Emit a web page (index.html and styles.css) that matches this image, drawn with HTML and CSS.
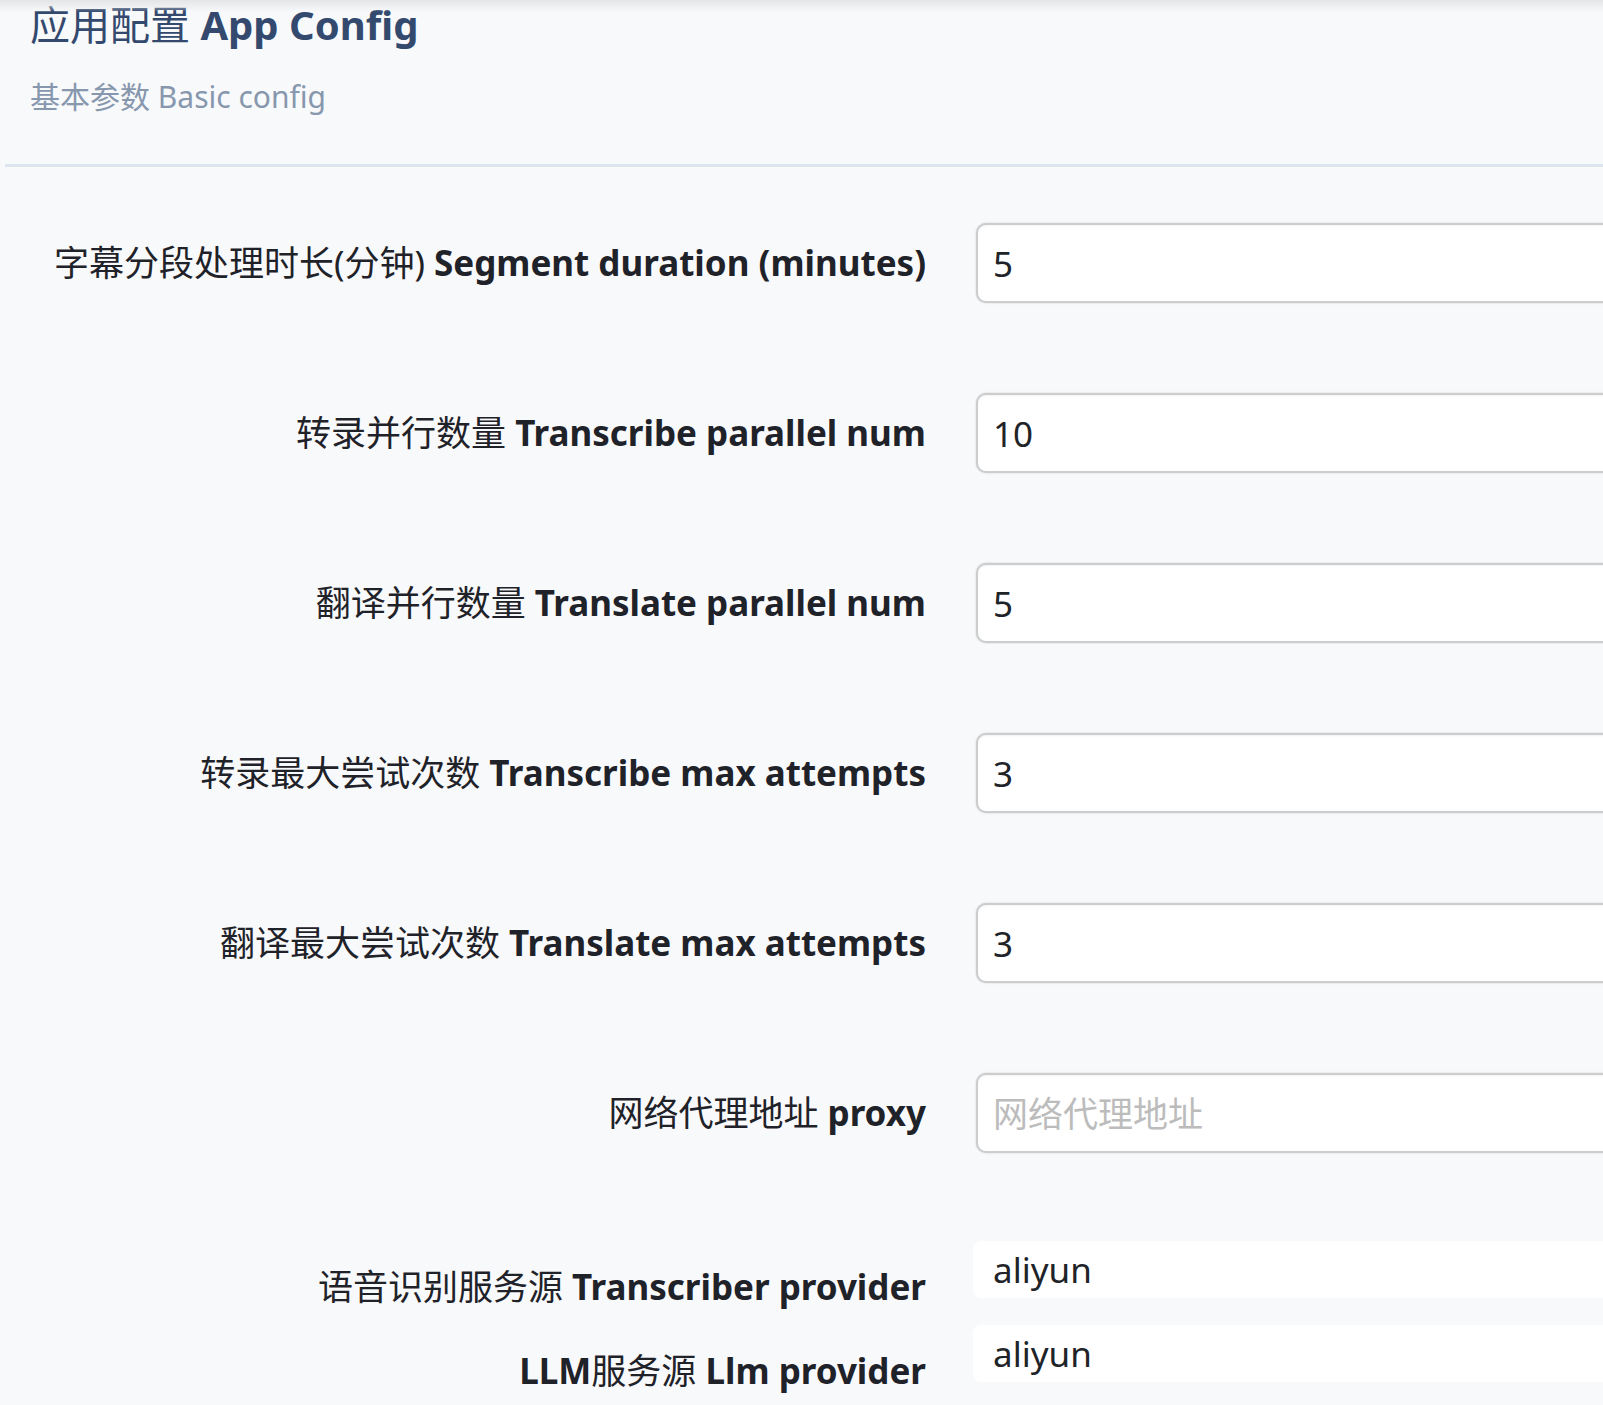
FILE: index.html
```html
<!DOCTYPE html>
<html lang="zh-CN">
<head>
    <meta charset="UTF-8">
    <meta name="viewport" content="width=device-width, initial-scale=1.0">
    <title>App Config</title>
    <link rel="stylesheet" href="styles.css">
</head>
<body>
    <div class="topbar"></div>
    <div class="page">
        <div class="header">
            <h1 class="title">应用配置 <b>App Config</b></h1>
            <p class="subtitle">基本参数 Basic config</p>
        </div>

        <div class="form">
            <div class="row">
                <label class="label" for="segment">字幕分段处理时长(分钟) <b>Segment duration (minutes)</b></label>
                <input class="input" type="text" id="segment" value="5">
            </div>
            <div class="row">
                <label class="label" for="transNum">转录并行数量 <b>Transcribe parallel num</b></label>
                <input class="input" type="text" id="transNum" value="10">
            </div>
            <div class="row">
                <label class="label" for="translateNum">翻译并行数量 <b>Translate parallel num</b></label>
                <input class="input" type="text" id="translateNum" value="5">
            </div>
            <div class="row">
                <label class="label" for="transMax">转录最大尝试次数 <b>Transcribe max attempts</b></label>
                <input class="input" type="text" id="transMax" value="3">
            </div>
            <div class="row">
                <label class="label" for="translateMax">翻译最大尝试次数 <b>Translate max attempts</b></label>
                <input class="input" type="text" id="translateMax" value="3">
            </div>
            <div class="row">
                <label class="label" for="proxy">网络代理地址 <b>proxy</b></label>
                <input class="input" type="text" id="proxy" placeholder="网络代理地址">
            </div>

            <div class="row select-row">
                <label class="label">语音识别服务源 <b>Transcriber provider</b></label>
                <div class="select">aliyun</div>
            </div>
            <div class="row select-row">
                <label class="label"><b>LLM</b>服务源 <b>Llm provider</b></label>
                <div class="select">aliyun</div>
            </div>
        </div>
    </div>
</body>
</html>
```

FILE: styles.css
```css
body {
    margin: 0;
    padding: 0;
    background: #f8f9fa;
    font-family: 'Noto Sans', 'Noto Sans CJK SC', sans-serif;
    color: #1f2229;
    overflow: hidden;
    height: 1405px;
    position: relative;
}
.topbar {
    height: 12px;
    background: linear-gradient(to bottom, #e4e5e6, rgba(248,249,250,0));
    position: absolute;
    top: 0;
    left: 0;
    right: 0;
}
.page {
    margin-left: 5px;
    width: 1700px;
}
.header {
    padding: 1px 0 47px 25px;
    border-bottom: 3px solid #dde6ef;
}
.title {
    margin: 0;
    font-size: 40px;
    line-height: 48px;
    font-weight: normal;
    color: #34496e;
}
.title b {
    font-weight: bold;
}
.subtitle {
    margin: 28px 0 0 0;
    font-size: 30px;
    line-height: 40px;
    color: #8797ae;
}
.form {
    padding-top: 56px;
}
.row {
    display: flex;
    align-items: center;
    margin-bottom: 90px;
}
.label {
    width: 921px;
    flex-shrink: 0;
    text-align: right;
    font-size: 35px;
    line-height: 50px;
    white-space: nowrap;
}
.label b {
    font-weight: bold;
}
.input {
    margin-left: 50px;
    width: 760px;
    height: 80px;
    box-sizing: border-box;
    padding: 0 15px;
    border: 2px solid #cbcdcf;
    border-radius: 10px;
    background: #fff;
    box-shadow: 0 0 2px rgba(0,0,0,0.18), inset 0 1px 2px rgba(0,0,0,0.05);
    font-family: 'Noto Sans', 'Noto Sans CJK SC', sans-serif;
    font-size: 35px;
    color: #202328;
    outline: none;
}
.input::placeholder {
    color: #bcbcbc;
}
.select-row {
    align-items: flex-start;
    margin-top: -2px;
    margin-bottom: 15px;
}
.select-row .label {
    padding-top: 21px;
}
.select {
    margin-left: 47px;
    width: 760px;
    height: 57px;
    box-sizing: border-box;
    padding: 0 20px;
    border-radius: 8px;
    background: #fff;
    font-size: 35px;
    line-height: 57px;
    color: #202328;
}
```
